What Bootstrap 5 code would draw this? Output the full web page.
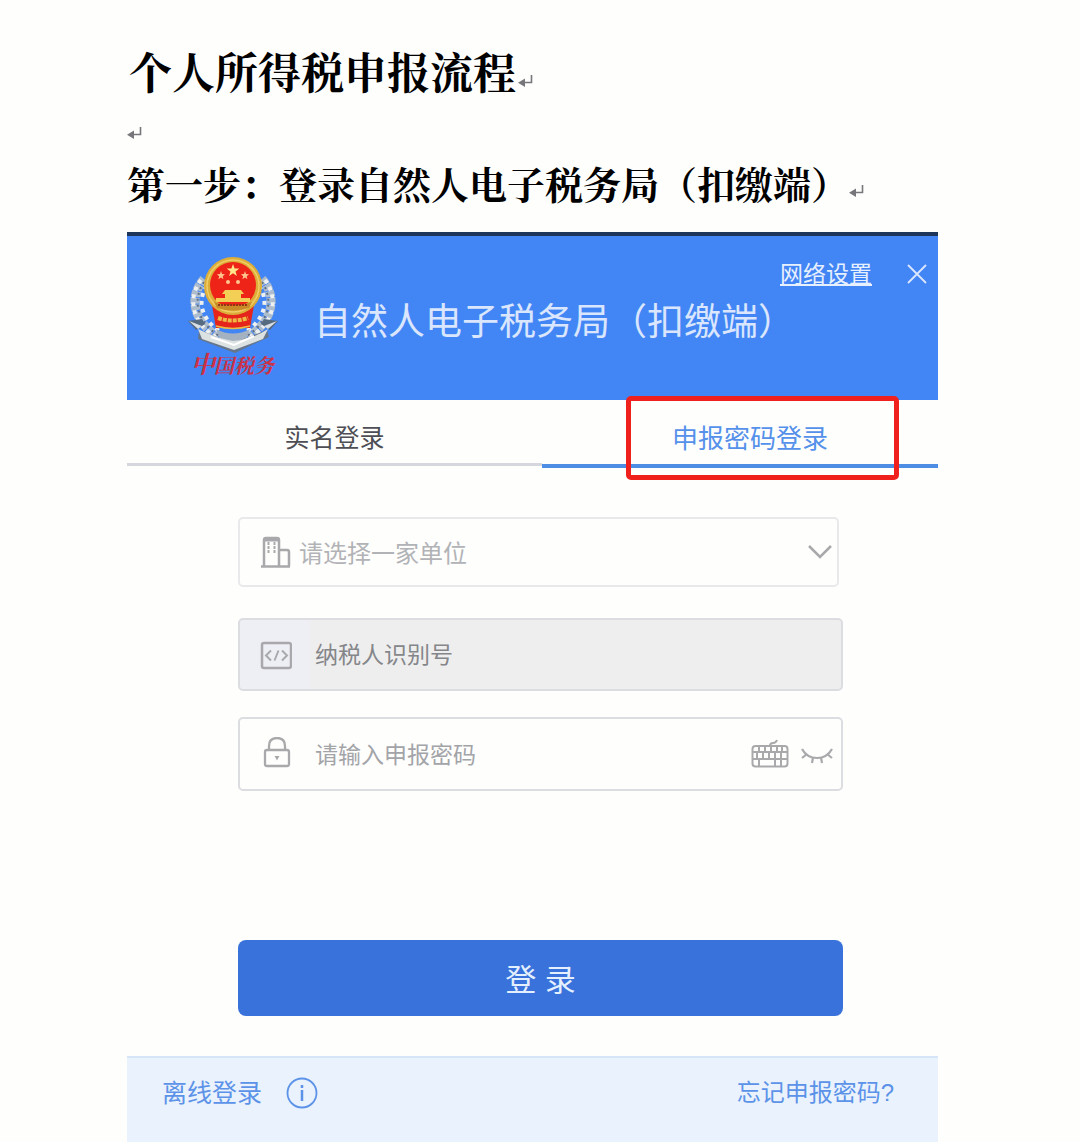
<!DOCTYPE html>
<html lang="zh-CN">
<head>
<meta charset="utf-8">
<meta name="viewport" content="width=device-width, initial-scale=1">
<title>个人所得税申报流程</title>
<link href="https://cdn.jsdelivr.net/npm/bootstrap@5.3.0/dist/css/bootstrap.min.css" rel="stylesheet">
<style>
  body { background: #fefefd; font-family: "Liberation Sans", "Noto Sans CJK SC", sans-serif; }
  .doc-page { padding: 42px 142px 0 127px; }
  .doc-heading { font-family: "Liberation Serif", "Noto Serif CJK SC", "Noto Sans CJK SC", serif; font-weight: 700; color: #000; margin: 0; white-space: nowrap; }
  .doc-title { font-size: 43px; line-height: 66px; padding-left: 2px; }
  .doc-blank { height: 50px; padding-top: 18px; line-height: 1; }
  .doc-step { font-size: 38px; line-height: 56px; margin-bottom: 18px; }
  .para-mark { width: 15px; height: 15px; display: inline-block; vertical-align: baseline; }
  .doc-title .para-mark { margin-left: 2px; }
  .doc-blank .para-mark { display: block; }

  .login-head { background: #4285f4; border-top: 4px solid #1c3558; height: 168px; padding: 0 10px 0 59px; color: #e6f0ff; }
  .emblem { width: 96px; height: 130px; margin-top: 16px; flex: none; }
  .head-body { padding: 21px 0 0 32px; }
  .head-tools { height: 34px; gap: 34px; }
  .head-tools a { font-size: 23px; line-height: 34px; color: #e6f0ff; text-underline-offset: 2px; }
  .close-btn { width: 22px; height: 22px; padding: 0; border: 0; background: none; color: #dbe7ff; display: flex; }
  .head-name { font-size: 37px; line-height: 64px; font-weight: 400; color: #d9e6fd; margin: 0; white-space: nowrap; }

  .tab-btn { background: none; border: 0; padding: 10px 0 0; font-size: 25px; line-height: 58px; text-align: center; }
  .tab-real { width: 51.2%; height: 66px; color: #4e4f55; border-bottom: 3px solid #d6d7de; line-height: 56px; }
  .tab-pass { width: 48.8%; height: 68px; padding-left: 20px; font-size: 26px; color: #5591ea; border-bottom: 4px solid #4d8de4; }
  .red-frame { position: absolute; top: -4px; right: 39px; width: 273px; height: 84px; border: 5px solid #f0211d; border-radius: 5px; pointer-events: none; }

  .login-form { padding: 49px 95px 40px 111px; }
  .field-box { position: relative; height: 73px; border: 2px solid #dcdde1; border-radius: 5px; color: #a9a9ac; }
  .field-box .form-control, .field-box .form-select { height: 100%; border: 0; background: none; box-shadow: none; border-radius: 4px; font-size: 23px; padding: 2px 100px 0 75px; color: #8f9094; }
  .field-box .form-control::placeholder { color: #a3a4a8; opacity: 1; }
  .field-unit { height: 70px; margin-right: 4px; margin-bottom: 31px; border-color: #e9e9ec; }
  .field-box .form-select { font-size: 24px; padding: 3px 40px 0 59px; color: #b2b3b6; }
  .field-tax { margin-bottom: 26px; background: linear-gradient(90deg, #eeeef5 0, #eeeef5 68px, #eeeeee 72px); }
  .field-tax .form-control::placeholder { color: #85868a; }
  .field-secret { height: 74px; margin-bottom: 149px; }
  .field-icon { position: absolute; left: 20px; top: 50%; transform: translateY(-50%); width: 32px; height: 34px; pointer-events: none; }
  .field-arrow { position: absolute; right: 4px; top: 50%; transform: translateY(-50%); width: 26px; height: 16px; pointer-events: none; }
  .field-actions { position: absolute; right: 8px; top: 0; height: 100%; gap: 12px; }
  .field-actions button { border: 0; background: none; padding: 0; color: inherit; display: flex; }
  .login-btn { height: 76px; width: 100%; border: 0; border-radius: 8px; padding-top: 10px; background: #3872da; color: #e4efff; font-size: 31px; line-height: 1; }
  .login-btn:hover { background: #2f66ca; color: #fff; }

  .login-foot { background: #eaf2fd; border-top: 2px solid #d7e5f8; min-height: 86px; padding: 16px 44px 0 35px; color: #5c93e8; }
  .login-foot a { color: #5c93e8; text-decoration: none; font-size: 25px; line-height: 38px; }
  .login-foot .forgot { font-size: 24px; }
  .info-icon { width: 32px; height: 32px; }
</style>
</head>
<body>
<svg class="d-none" aria-hidden="true">
  <symbol id="pmark" viewBox="0 0 15 15"><path d="M13.5 1v7.5H6" fill="none" stroke="#77777b" stroke-width="1.6"/><path d="M0 8.700 7 4.500v8.500z" fill="#77777b"/></symbol>
</svg>
<main class="doc-page d-flex flex-column min-vh-100">
  <h1 class="doc-heading doc-title">个人所得税申报流程<svg class="para-mark" aria-hidden="true"><use href="#pmark"/></svg></h1>
  <div class="doc-blank"><svg class="para-mark" aria-hidden="true"><use href="#pmark"/></svg></div>
  <h2 class="doc-heading doc-step">第一步：登录自然人电子税务局（扣缴端）<svg class="para-mark" aria-hidden="true"><use href="#pmark"/></svg></h2>

  <section class="d-flex flex-column flex-grow-1">
    <header class="login-head d-flex align-items-start">
      <svg class="emblem" viewBox="0 0 96 130" role="img" aria-label="中国税务">
        <g fill="none" stroke="#aebdce" stroke-width="9" stroke-dasharray="6 1">
          <path d="M18 27C2 45 7 70 34 86"/><path d="M76 27C92 45 87 70 60 86"/>
        </g>
        <g fill="none" stroke="#eef0f0" stroke-width="4" stroke-dasharray="4 4">
          <path d="M15 28C1 46 5 73 35 88"/><path d="M79 28C93 46 89 73 59 88"/>
          <path d="M21 34C11 48 14 67 36 81"/><path d="M73 34C83 48 80 67 58 81"/>
        </g>
        <path d="M30 77q17 9 34 0l-5 12H35z" fill="#a3b1c0"/>
        <g fill="none" stroke="#5f7084" stroke-width="2" stroke-dasharray="2 4"><path d="M18 30C6 48 11 70 33 84"/><path d="M76 30C88 48 83 70 61 84"/></g>
        <path d="M2 69l14-2 3 5-9 6zM92 69l-14-2-3 5 9 6z" fill="#566a80"/>
        <path d="M3 69l13 5-4 3zM91 69l-13 5 4 3z" fill="#d8dfe5"/>
        <path d="M13 78l34 13 34-13 2 7-34 16-37-14z" fill="#66768a"/>
        <path d="M12 77q18 9 35 12 20-2 35-12l-5 10-29 11-32-11z" fill="#dce1e2"/>
        <path d="M25 85l23 8 20-9" fill="none" stroke="#fff" stroke-width="2"/>
        <path d="M26 53h42l-4 23H30z" fill="#e5251b"/>
        <circle cx="47" cy="34" r="29" fill="#dcae39"/>
        <circle cx="47" cy="34" r="26" fill="none" stroke="#f0cd66" stroke-width="1.500"/>
        <circle cx="47" cy="33" r="23" fill="#ef2418"/>
        <path d="M47 12l1.600 4.500h4.700l-3.800 2.900 1.400 4.600-3.900-2.800-3.900 2.800 1.400-4.600-3.800-2.900h4.700z" fill="#ffe78a"/>
        <g fill="#ffc58e"><path d="M35 19l1 3 3 .3-2.300 2 .7 3-2.400-1.700-2.600 1.700.8-3-2.300-2 3.100-.3zM59 19l1 3 3 .3-2.300 2 .7 3-2.400-1.700-2.600 1.700.8-3-2.300-2 3.100-.3z"/><circle cx="42" cy="30" r="2"/><circle cx="52" cy="30" r="2"/></g>
        <path d="M39 38h16l3 4h-3v4h9v4H30v-4h9v-4h-3z" fill="#f3cf55"/>
        <path d="M28 50q19 7 38 0l-3 6q-16 5-32 0z" fill="#c98b27"/>
        <path d="M32 53h30" stroke="#8f3a14" stroke-width="2" stroke-dasharray="2 1"/>
        <path d="M36 61q11 6 22 0l7 11q-18 5-36 0z" fill="#e5251b"/>
        <path d="M32 66q15 5 30 0" fill="none" stroke="#ecba45" stroke-width="4" stroke-dasharray="4 1"/>
        <path d="M30 74q17 5 34 0" fill="none" stroke="#ecba45" stroke-width="1.500"/>
        <g fill="#cd3145" font-family="Noto Serif CJK SC, Noto Sans CJK SC, serif" font-weight="700" font-style="italic"><text x="5" y="121" font-size="24">中</text><text x="28" y="121" font-size="20">国税务</text></g>
      </svg>
      <div class="head-body flex-grow-1">
        <div class="head-tools d-flex justify-content-end align-items-center">
          <a href="#">网络设置</a>
          <button type="button" class="close-btn" aria-label="关闭"><svg width="22" height="22" viewBox="0 0 22 22" fill="none" stroke="currentColor" stroke-width="1.800"><path d="M2 2l18 18M20 2L2 20"/></svg></button>
        </div>
        <p class="head-name">自然人电子税务局（扣缴端）</p>
      </div>
    </header>

    <div class="position-relative d-flex align-items-start" role="tablist">
      <button type="button" class="tab-btn tab-real" role="tab" aria-selected="false">实名登录</button>
      <button type="button" class="tab-btn tab-pass" role="tab" aria-selected="true">申报密码登录</button>
      <span class="red-frame"></span>
    </div>

    <form class="login-form">
      <div class="field-box field-unit">
        <svg class="field-icon" viewBox="0 0 32 34" fill="none" stroke="currentColor" stroke-width="2.500"><path d="M4 31V5q0-2 2-2h11q2 0 2 2v26M20 15h7q2 0 2 2v14M1 31.500h29"/><path d="M8.500 7v11M14.500 7v11" stroke-width="2" stroke-dasharray="3 1"/><path d="M5 5h13" stroke-width="3"/></svg>
        <select class="form-select" aria-label="单位"><option>请选择一家单位</option></select>
        <svg class="field-arrow" viewBox="0 0 26 16" fill="none" stroke="currentColor" stroke-width="2.500"><path d="M2 2l11 11L24 2"/></svg>
      </div>
      <div class="field-box field-tax">
        <svg class="field-icon" viewBox="0 0 32 34" fill="none" stroke="currentColor" stroke-width="2.500"><rect x="2" y="5" width="29" height="25" rx="2"/><path d="M11 12.500l-5 5 5 5M22 12.500l5 5-5 5M18.500 12.500l-4 10" stroke-width="2"/></svg>
        <input class="form-control" type="text" placeholder="纳税人识别号" aria-label="纳税人识别号" readonly>
      </div>
      <div class="field-box field-secret">
        <svg class="field-icon" viewBox="0 0 32 34" fill="none" stroke="currentColor" stroke-width="2.300"><rect x="5" y="13" width="24" height="16" rx="2"/><path d="M9 13V9q0-8 8-8T25 9v4"/><path d="M14.500 19h5L17 23.500z" fill="currentColor" stroke="none"/></svg>
        <input class="form-control" type="password" placeholder="请输入申报密码" aria-label="申报密码">
        <div class="field-actions d-flex align-items-center">
          <button type="button" aria-label="软键盘"><svg width="38" height="30" viewBox="0 0 38 30" fill="none" stroke="currentColor" stroke-width="2"><rect x="1.500" y="7" width="35" height="20.500" rx="3"/><path d="M19 7q0-3 3-3t4-3M2 13h34M2 20h34M8 7v6M14 7v6M20 7v6M26 7v6M31 7v6M6 13v7M12 13v7M18 13v7M24 13v7M30 13v7M8 20v7M30 20v7M24 20v7"/></svg></button>
          <button type="button" aria-label="显示密码"><svg width="32" height="30" viewBox="0 0 32 30" fill="none" stroke="currentColor" stroke-width="2.200"><path d="M1 10q5 9 15 9t15-9M6 15l-5 4M12 18.500L11 24M20 18.500l1 5.500M26 15l5 4"/></svg></button>
        </div>
      </div>
      <button type="submit" class="btn login-btn">登 录</button>
    </form>

    <footer class="login-foot d-flex align-items-start justify-content-between flex-grow-1">
      <div class="d-flex align-items-center">
        <a href="#">离线登录</a>
        <svg class="info-icon ms-4" viewBox="0 0 32 32" fill="none" stroke="currentColor" stroke-width="1.800"><circle cx="16" cy="16" r="14.500"/><path d="M16 13v11M16 8v3" stroke-width="2.500"/></svg>
      </div>
      <a class="forgot" href="#">忘记申报密码?</a>
    </footer>
  </section>
</main>
<script src="https://cdn.jsdelivr.net/npm/bootstrap@5.3.0/dist/js/bootstrap.bundle.min.js"></script>
</body>
</html>
